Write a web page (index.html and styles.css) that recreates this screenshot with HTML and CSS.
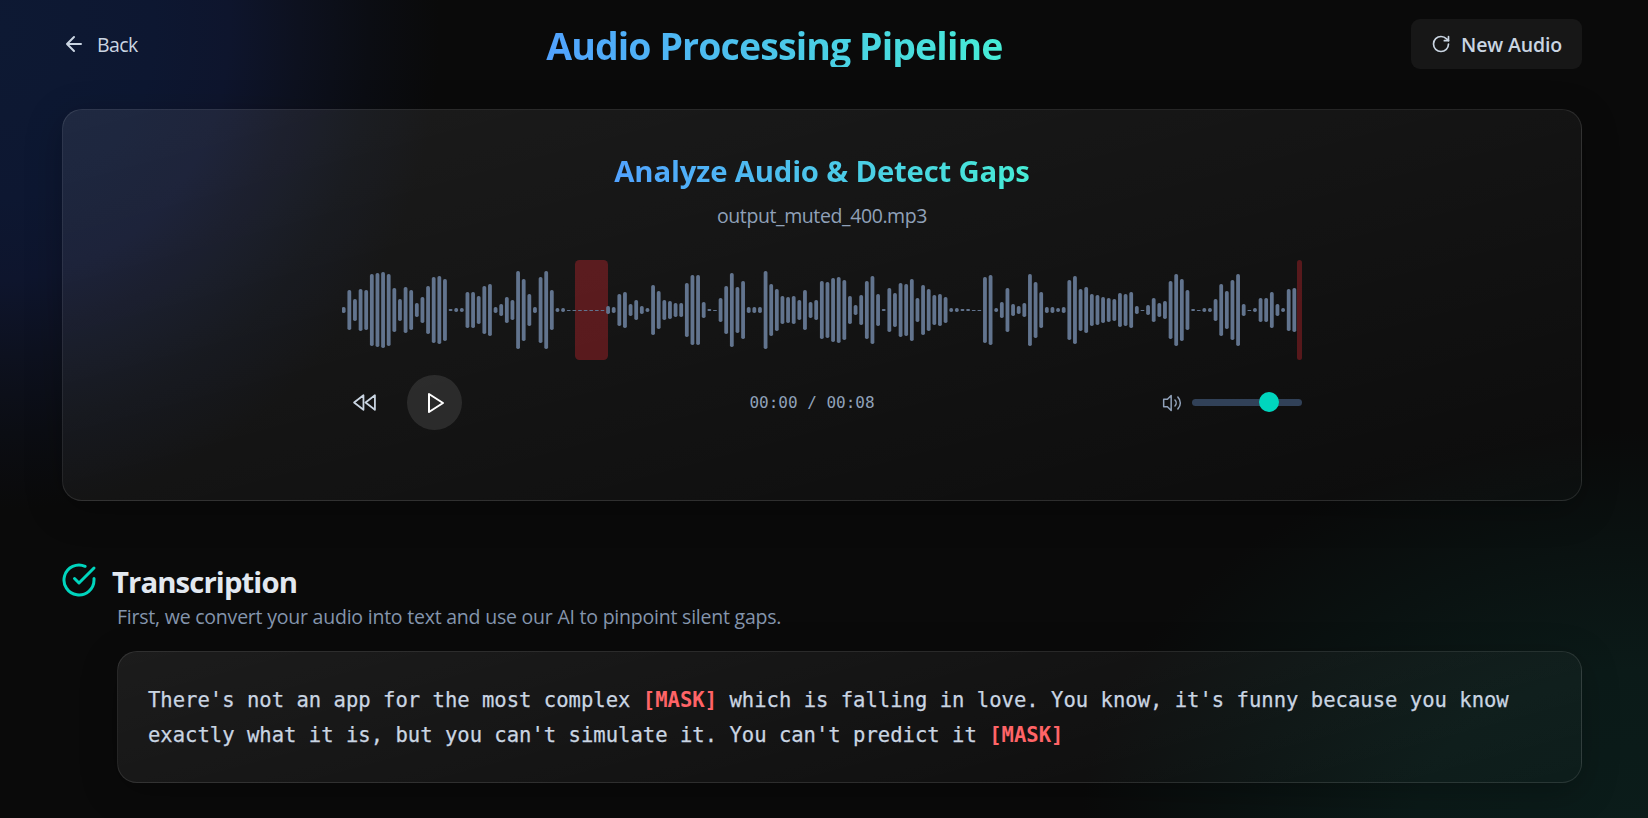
FILE: index.html
```html
<!DOCTYPE html>
<html lang="en">
<head>
<meta charset="utf-8">
<title>Audio Processing Pipeline</title>
<link rel="stylesheet" href="styles.css">
</head>
<body>
<main class="page">
  <header class="header">
    <a class="back"><svg class="icon-back" viewBox="0 0 24 24"><path d="m12 19-7-7 7-7M19 12H5"/></svg><span>Back</span></a>
    <h1 class="title">Audio Processing Pipeline</h1>
    <button class="new-audio"><svg class="icon-new" viewBox="0 0 24 24"><path d="M21 12a9 9 0 1 1-9-9c2.52 0 4.93 1 6.74 2.74L21 8"/><path d="M21 3v5h-5"/></svg><span>New Audio</span></button>
  </header>
  <section class="card player">
    <h2 class="subtitle">Analyze Audio &amp; Detect Gaps</h2>
    <p class="filename">output_muted_400.mp3</p>
    <svg class="wave" id="wave" viewBox="0 0 960 100"></svg>
    <div class="controls">
      <div class="transport">
        <svg class="icon-rewind" viewBox="0 0 24 24"><path d="m11 19-9-7 9-7v14zM22 19l-9-7 9-7v14z"/></svg>
        <span class="play"><svg class="icon-play" viewBox="0 0 24 24"><path d="m6 3 14 9-14 9V3z"/></svg></span>
      </div>
      <span class="time">00:00 / 00:08</span>
      <div class="volume">
        <svg class="icon-volume" viewBox="0 0 24 24"><path d="M11 3 6.500 7.500H2v9h4.500l4.500 4.500V3zM15.540 8.460a5 5 0 0 1 0 7.070M19.070 4.930a10 10 0 0 1 0 14.140"/></svg>
        <span class="track"><span class="thumb"></span></span>
      </div>
    </div>
  </section>
  <section class="step">
    <div class="step-head">
      <svg class="icon-check" viewBox="0 0 24 24"><path d="M22 11.080V12a10 10 0 1 1-5.930-9.140"/><path d="m9 11 3 3L22 4"/></svg>
      <h3 class="step-title">Transcription</h3>
    </div>
    <p class="step-text">First, we convert your audio into text and use our AI to pinpoint silent gaps.</p>
    <div class="card transcript">There's not an app for the most complex <b class="mask">[MASK]</b> which is falling in love. You know, it's funny because you know<br>exactly what it is, but you can't simulate it. You can't predict it <b class="mask">[MASK]</b></div>
  </section>
</main>
<script src="wave.js"></script>
</body>
</html>
```
FILE: styles.css
```css
* { box-sizing: border-box; margin: 0; padding: 0; }
body {
  height: 818px;
  overflow: hidden;
  color: #e2e8f0;
  font-family: "Open Sans", "Noto Sans", sans-serif;
  background:
    radial-gradient(ellipse 440px 480px at 0 30px, #0d1933 0%, #0d1731 35%, #0e152d 52%, #0d111f 68%, #0b0d13 84%, rgba(10, 10, 10, 0) 100%),
    radial-gradient(ellipse 560px 400px at 1640px 830px, #0b1c1a 0%, #0b1a18 40%, #0a1211 70%, rgba(10, 10, 10, 0) 100%),
    #0a0a0a;
}
svg { flex: none; fill: none; stroke: currentColor; stroke-width: 2; stroke-linecap: round; stroke-linejoin: round; }
.page { padding: 19px 66px 0 62px; }
.header { display: flex; align-items: center; justify-content: space-between; height: 50px; }
.back { display: flex; align-items: center; gap: 11px; color: #cad5e2; font-size: 19.5px; letter-spacing: -.6px; }
.icon-back { width: 24px; height: 24px; }
.title, .subtitle {
  font-weight: 700;
  color: transparent;
  background: linear-gradient(90deg, #51a2ff, #46ecd5);
  -webkit-background-clip: text;
  background-clip: text;
  white-space: nowrap;
}
.title { font-size: 37.5px; line-height: 47px; height: 45px; margin-top: 1px; letter-spacing: -.9px; }
.new-audio {
  display: flex; align-items: center; justify-content: center; gap: 10px;
  width: 171px; height: 50px;
  border: 0; border-radius: 9px; background: #171717;
  color: #cad5e2; font-family: inherit; font-size: 19.5px; font-weight: 600; letter-spacing: -.15px; white-space: nowrap;
}
.icon-new { width: 20px; height: 20px; }
.card {
  border: 1px solid rgba(255, 255, 255, .1);
  border-radius: 20px;
  background: linear-gradient(165deg, rgba(255, 255, 255, .075), rgba(255, 255, 255, .01));
  box-shadow: 0 9px 36px rgba(0, 0, 0, .25);
}
.player { display: flex; flex-direction: column; align-items: center; height: 392px; margin-top: 40px; padding-top: 41px; }
.subtitle { font-size: 29.3px; line-height: 41px; letter-spacing: -.2px; }
.filename { margin-top: 8px; color: #90a1b9; font-size: 19.5px; line-height: 32px; letter-spacing: -.4px; }
.wave { width: 960px; height: 100px; margin-top: 28px; stroke: none; }
.bar { fill: #62748e; }
.gap { fill: #fb2c36; fill-opacity: .3; }
.controls { display: flex; align-items: center; justify-content: space-between; width: 960px; height: 55px; margin-top: 15px; }
.transport { display: flex; align-items: center; gap: 29px; padding-left: 10px; }
.icon-rewind { width: 25px; height: 25px; color: #cad5e2; margin-right: 1px; stroke-width: 1.7; }
.play { display: flex; align-items: center; justify-content: center; width: 55px; height: 55px; border-radius: 50%; background: rgba(255, 255, 255, .1); color: #fff; }
.icon-play { width: 24px; height: 24px; }
.time { color: #90a1b9; font-family: "DejaVu Sans Mono", monospace; font-size: 16px; }
.volume { display: flex; align-items: center; gap: 10px; color: #90a1b9; }
.icon-volume { width: 20px; height: 20px; stroke-width: 1.8; }
.track { position: relative; width: 110px; height: 7px; border-radius: 4px; background: #314158; }
.thumb { position: absolute; left: 67px; top: -7px; width: 20px; height: 20px; border-radius: 50%; background: #00d5be; }
.step { margin-top: 60px; }
.step-head { display: flex; align-items: center; gap: 15px; height: 38px; }
.icon-check { width: 36px; height: 36px; color: #00d5be; margin-left: -1px; }
.step-title { font-size: 29.3px; line-height: 38px; font-weight: 700; letter-spacing: -.9px; padding-top: 3px; }
.step-text { margin: 2px 0 0 55px; color: #8495ad; font-size: 19.5px; line-height: 32px; letter-spacing: -.22px; }
.transcript {
  margin: 18px 0 0 55px; height: 132px; padding: 31px 30px;
  color: #cad5e2; font-family: "DejaVu Sans Mono", monospace; font-size: 20.56px; line-height: 35px; white-space: nowrap;
  -webkit-text-stroke: .25px currentColor;
}
.mask { color: #ff6467; font-weight: 700; -webkit-text-stroke: 0; }
```
FILE: wave.js
```js
const heights = [
  6,40,22,42,40,72,74,76,72,44,22,46,40,14,26,48,66,68,62,2,4,4,36,36,28,48,52,6,12,26,20,78,62,32,6,66,78,40,4,4,
  1,1,1,1,1,1,1,8,6,32,36,12,20,8,4,50,38,20,18,14,14,54,70,70,16,2,1,24,48,74,46,58,6,6,6,78,52,42,28,26,
  28,20,40,16,20,58,56,64,66,60,28,10,30,58,68,32,2,44,34,54,52,62,24,50,42,30,32,26,4,4,2,2,1,1,66,70,4,16,44,12,
  8,14,72,56,36,6,6,4,6,60,68,42,46,32,30,26,24,22,34,32,36,8,1,10,24,14,18,58,72,62,40,2,1,4,4,22,52,38,60,72,
  12,1,4,24,24,36,12,4,42,44
];
const gaps = [[233, 33], [955, 5]];
const wave = document.getElementById('wave');
function rect(cls, x, y, w, h, r) {
  const el = document.createElementNS('http://www.w3.org/2000/svg', 'rect');
  const attrs = { class: cls, x, y, width: w, height: h, rx: r };
  for (const key in attrs) el.setAttribute(key, attrs[key]);
  wave.appendChild(el);
}
gaps.forEach(([x, w]) => rect('gap', x, 0, w, 100, Math.min(4.5, w / 2)));
heights.forEach((h, i) => rect('bar', i * 5.625 - .2, h === 1 ? 50 : 50 - h / 2, 3.8, h, Math.min(1.7, h / 2)));
```
